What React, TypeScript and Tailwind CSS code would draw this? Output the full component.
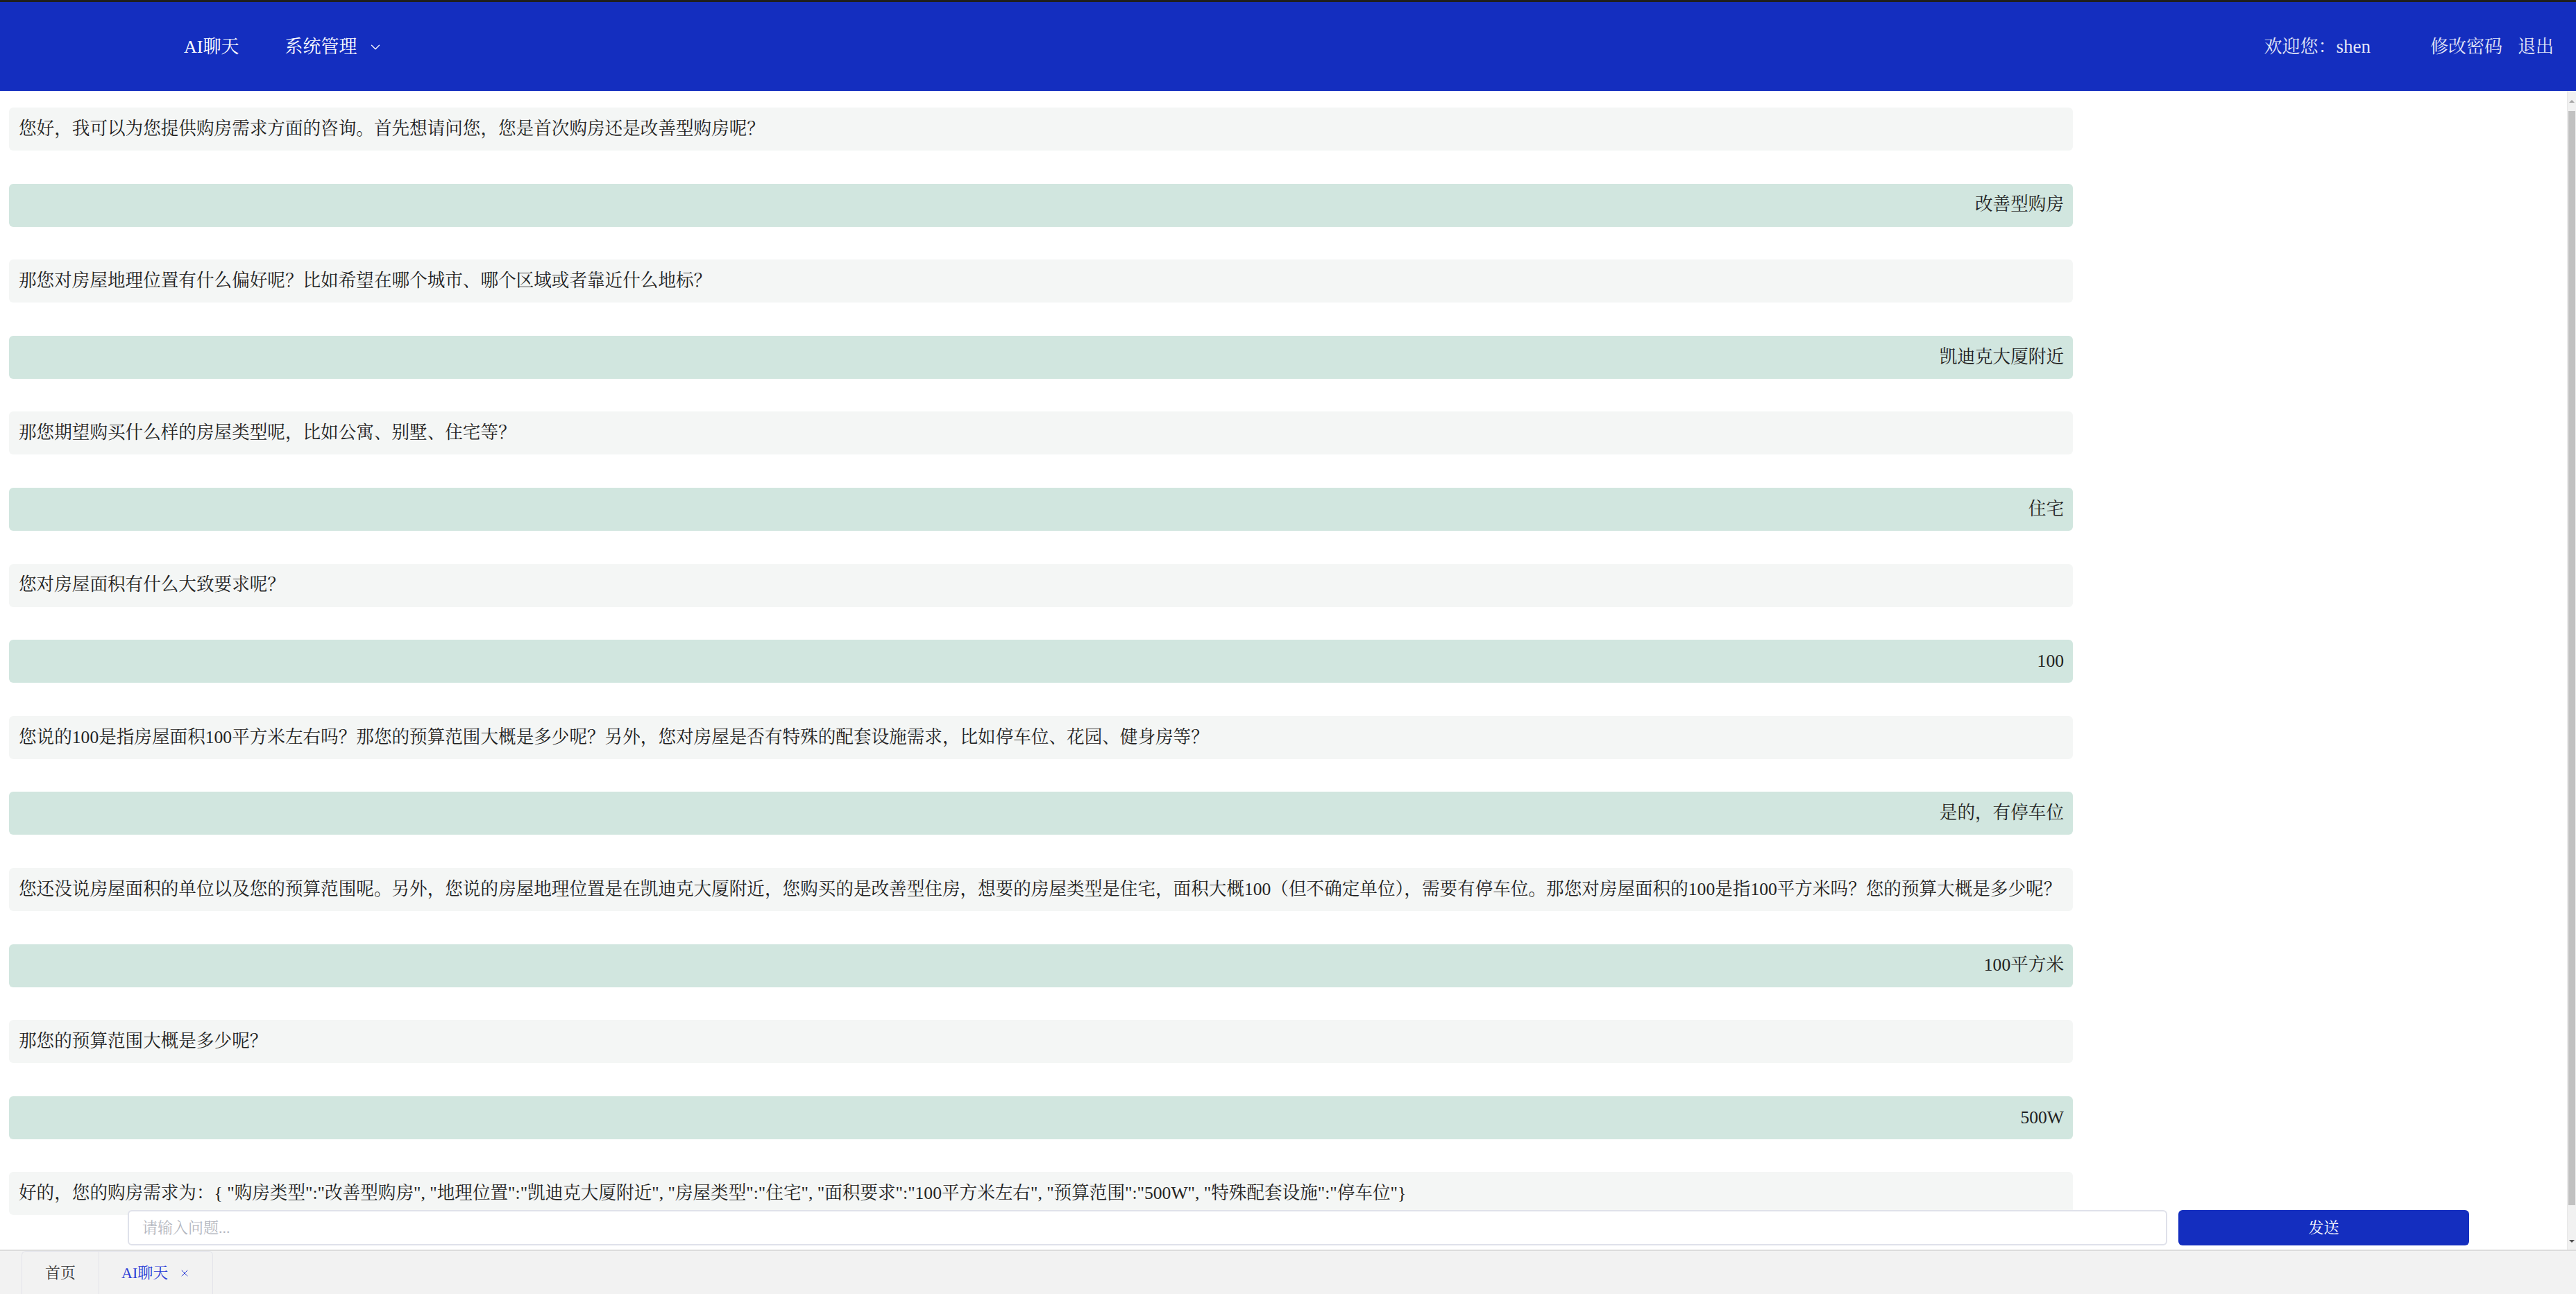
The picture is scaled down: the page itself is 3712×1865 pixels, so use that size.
import React, { useState } from 'react';
import { ChevronDown, X } from 'lucide-react';

interface Message {
  id: number;
  role: 'assistant' | 'user';
  content: string;
}

const messages: Message[] = [
  { id: 1, role: 'assistant', content: '您好，我可以为您提供购房需求方面的咨询。首先想请问您，您是首次购房还是改善型购房呢？' },
  { id: 2, role: 'user', content: '改善型购房' },
  { id: 3, role: 'assistant', content: '那您对房屋地理位置有什么偏好呢？比如希望在哪个城市、哪个区域或者靠近什么地标？' },
  { id: 4, role: 'user', content: '凯迪克大厦附近' },
  { id: 5, role: 'assistant', content: '那您期望购买什么样的房屋类型呢，比如公寓、别墅、住宅等？' },
  { id: 6, role: 'user', content: '住宅' },
  { id: 7, role: 'assistant', content: '您对房屋面积有什么大致要求呢？' },
  { id: 8, role: 'user', content: '100' },
  { id: 9, role: 'assistant', content: '您说的100是指房屋面积100平方米左右吗？那您的预算范围大概是多少呢？另外，您对房屋是否有特殊的配套设施需求，比如停车位、花园、健身房等？' },
  { id: 10, role: 'user', content: '是的，有停车位' },
  { id: 11, role: 'assistant', content: '您还没说房屋面积的单位以及您的预算范围呢。另外，您说的房屋地理位置是在凯迪克大厦附近，您购买的是改善型住房，想要的房屋类型是住宅，面积大概100（但不确定单位），需要有停车位。那您对房屋面积的100是指100平方米吗？您的预算大概是多少呢？' },
  { id: 12, role: 'user', content: '100平方米' },
  { id: 13, role: 'assistant', content: '那您的预算范围大概是多少呢？' },
  { id: 14, role: 'user', content: '500W' },
  { id: 15, role: 'assistant', content: '好的，您的购房需求为：{ "购房类型":"改善型购房", "地理位置":"凯迪克大厦附近", "房屋类型":"住宅", "面积要求":"100平方米左右", "预算范围":"500W", "特殊配套设施":"停车位"}' },
];

const App: React.FC = () => {
  const [question, setQuestion] = useState('');

  return (
    <div
      className="flex h-screen w-full flex-col overflow-hidden bg-white text-[#222]"
      style={{ fontFamily: '"Liberation Serif", "Noto Serif CJK SC", "Noto Sans CJK SC", serif' }}
    >
      {/* Top navigation */}
      <header className="flex h-[131px] shrink-0 items-center border-t-[3px] border-[#1f1f1f] bg-[#142ebf] pr-[32px] text-[26px] text-white">
        <nav className="flex items-center pl-[265px]">
          <span>AI聊天</span>
          <span className="ml-[66px] flex items-center">
            系统管理
            <ChevronDown size={22} strokeWidth={1.4} className="ml-[16px] mt-[2px]" />
          </span>
        </nav>
        <div className="ml-auto flex items-center text-[#e3e6f7]">
          <span>
            欢迎您：<span className="text-[27px]">shen</span>
          </span>
          <span className="ml-[86px]">修改密码</span>
          <span className="ml-[22px]">退出</span>
        </div>
      </header>

      {/* Chat area */}
      <main className="relative flex min-h-0 flex-1">
        <div className="min-w-0 flex-1 overflow-hidden">
          <div className="flex flex-col gap-[47.6px] pb-[87px] pl-[13px] pt-[24px]">
            {messages.map((m) => (
              <div
                key={m.id}
                className={
                  m.role === 'user'
                    ? 'flex h-[62px] w-[2974px] items-center justify-end whitespace-nowrap rounded-[6px] bg-[#d1e6df] px-[13px] text-[25.6px]'
                    : 'flex h-[62px] w-[2974px] items-center whitespace-nowrap rounded-[6px] bg-[#f4f6f5] px-[14px] text-[25.6px]'
                }
              >
                {m.content}
              </div>
            ))}
          </div>
        </div>

        {/* scrollbar */}
        <div className="flex w-[13px] shrink-0 flex-col border-l border-[#e8e8e8] bg-[#f1f1f1]">
          <div className="flex h-[29px] items-center justify-center">
            <div className="h-0 w-0 border-x-[4px] border-b-[4px] border-x-transparent border-b-[#a3a3a3]" />
          </div>
          <div className="mx-[1px] h-[1577px] bg-[#c1c1c1]" />
          <div className="flex flex-1 items-end justify-center pb-[10px]">
            <div className="h-0 w-0 border-x-[4px] border-t-[4px] border-x-transparent border-t-[#505050]" />
          </div>
        </div>

        {/* Question input, floats over the list */}
        <div className="absolute bottom-[6px] left-[184px] flex h-[51px] items-stretch gap-[16px]">
          <input
            value={question}
            onChange={(e) => setQuestion(e.target.value)}
            placeholder="请输入问题..."
            className="w-[2939px] rounded-[6px] border-2 border-[#dfe1ea] bg-white px-[19px] text-[22px] text-[#333] outline-none placeholder:text-[#b4b7bf]"
          />
          <button className="w-[419px] rounded-[6px] bg-[#142ebf] text-[22px] text-white">发送</button>
        </div>
      </main>

      {/* Tab bar */}
      <footer className="flex h-[64px] shrink-0 items-end border-t-2 border-[#dcdcdc] bg-[#f2f2f2] pl-[31px]">
        <div className="flex h-[62px] rounded-t-[6px] border border-b-0 border-[#e3e4ea] text-[22px]">
          <div className="flex w-[110px] items-center justify-center text-[#333]">首页</div>
          <div className="flex w-[164px] items-center border-l border-[#e3e4ea] pl-[32px] text-[#2a3ad6]">
            AI聊天
            <X size={16} strokeWidth={1.5} className="ml-[16px]" />
          </div>
        </div>
      </footer>
    </div>
  );
};

export default App;
